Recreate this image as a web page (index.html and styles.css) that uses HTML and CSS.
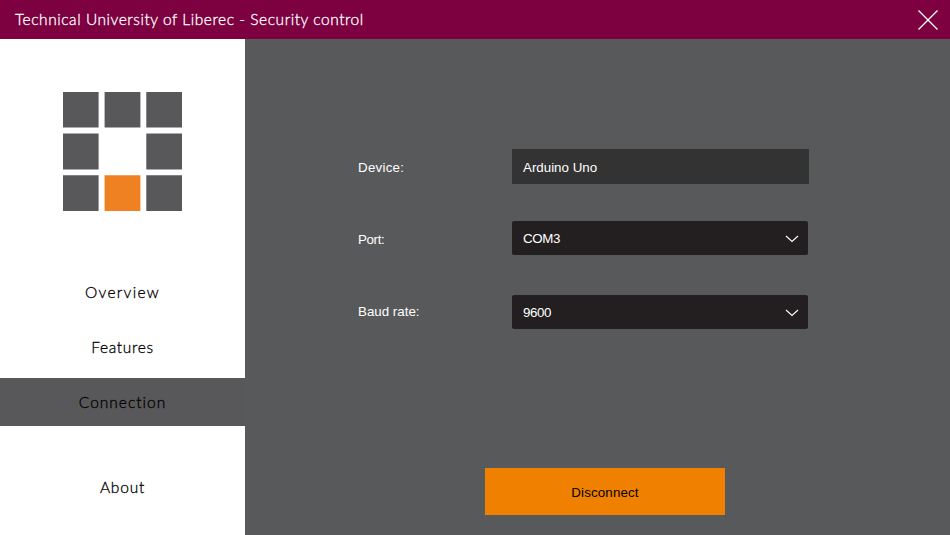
FILE: index.html
```html
<!DOCTYPE html>
<html lang="en">
<head>
<meta charset="utf-8">
<title>Technical University of Liberec - Security control</title>
<link rel="stylesheet" href="styles.css">
</head>
<body>
<div class="window">
  <header class="titlebar">
    <h1 class="title">Technical University of Liberec - Security control</h1>
    <button class="close" aria-label="Close">
      <svg width="20" height="20" viewBox="0 0 20 20"><path d="M.5.5l19 19M19.5.5l-19 19"/></svg>
    </button>
  </header>
  <div class="body">
    <aside class="sidebar">
      <svg class="logo" width="119" height="119" viewBox="0 0 119 119">
        <path d="M0 0h35.6v35.6H0zM41.6 0h35.8v35.6H41.6zM83.3 0H119v35.6H83.3zM0 41.6h35.6v35.8H0zM83.3 41.6H119v35.8H83.3zM0 83.3h35.6V119H0zM83.3 83.3H119V119H83.3z"/>
        <path class="logo-accent" d="M41.6 83.3h35.8V119H41.6z"/>
      </svg>
      <nav class="nav">
        <a class="nav-item overview">Overview</a>
        <a class="nav-item features">Features</a>
        <a class="nav-item connection active">Connection</a>
        <a class="nav-item about">About</a>
      </nav>
    </aside>
    <main class="content">
      <div class="form">
        <div class="row device"><span class="label">Device:</span><div class="field">Arduino Uno</div></div>
        <div class="row port"><span class="label">Port:</span>
          <div class="select"><span>COM3</span><svg width="14" height="8" viewBox="0 0 14 8"><path d="M1 1l6 5.5L13 1"/></svg></div></div>
        <div class="row baud"><span class="label">Baud rate:</span>
          <div class="select"><span>9600</span><svg width="14" height="8" viewBox="0 0 14 8"><path d="M1 1l6 5.5L13 1"/></svg></div></div>
      </div>
      <button class="disconnect">Disconnect</button>
    </main>
  </div>
</div>
</body>
</html>
```
FILE: styles.css
```css
* { box-sizing: border-box; }
body { margin: 0; font-family: "Liberation Sans", Arial, sans-serif; font-size: 13.33px; }
.window { width: 950px; height: 535px; display: flex; flex-direction: column; overflow: hidden; }
.titlebar { height: 39px; flex: none; background: #7d0040; display: flex; align-items: center; justify-content: space-between; padding: 0 12px 0 15px; }
.title { margin: 0; color: #fff; font: 300 15.5px/39px "Century Gothic", Lato, sans-serif; letter-spacing: .55px; white-space: nowrap; -webkit-text-stroke: .3px; }
.close { border: 0; padding: 0; background: none; width: 20px; height: 20px; }
.close svg { display: block; }
.close path { stroke: #fff; stroke-width: 1.3; fill: none; }
.body { flex: 1; display: flex; }
.sidebar { width: 245px; background: #fff; display: flex; flex-direction: column; }
.logo { margin: 53px 0 0 63px; fill: #58585a; }
.logo-accent { fill: #ef8122; }
.nav { display: flex; flex-direction: column; margin-top: 57px; }
.nav-item { height: 48px; line-height: 49px; text-align: center; color: #000; font-family: "Century Gothic", Lato, sans-serif; font-weight: 300; font-size: 15.5px; letter-spacing: 1px; -webkit-text-stroke: .3px; }
.overview { letter-spacing: 1.3px; }
.features { margin-top: 7px; letter-spacing: .7px; }
.connection { margin-top: 7px; }
.about { margin-top: 37px; letter-spacing: .8px; }
.active { background: #58585a; }
.content { flex: 1; background: #58595b; display: flex; flex-direction: column; }
.form { margin: 110px 0 0 113px; height: 319px; display: flex; flex-direction: column; }
.row { display: flex; align-items: center; color: #fff; }
.label { width: 154px; }
.device { height: 35px; }
.port { margin-top: 37px; height: 34px; }
.baud { margin-top: 40px; height: 34px; }
.device .label { padding-top: 1px; letter-spacing: .25px; }
.port .label { padding-top: 2px; letter-spacing: -.35px; }
.baud .label { padding-bottom: 1px; }
.field { width: 297px; height: 35px; line-height: 37px; padding-left: 11px; background: #333; }
.select { width: 296px; height: 34px; padding: 0 9px 0 11px; border-radius: 2px; background: #231f20; display: flex; align-items: center; justify-content: space-between; letter-spacing: -.4px; }
.select svg { margin-top: 2px; }
.select path { fill: none; stroke: #fff; stroke-width: 1.1; }
.disconnect { margin-left: 240px; width: 240px; height: 47px; border: 0; padding: 2px 0 0; background: #f08000; color: #000; font: inherit; letter-spacing: .15px; }
```
